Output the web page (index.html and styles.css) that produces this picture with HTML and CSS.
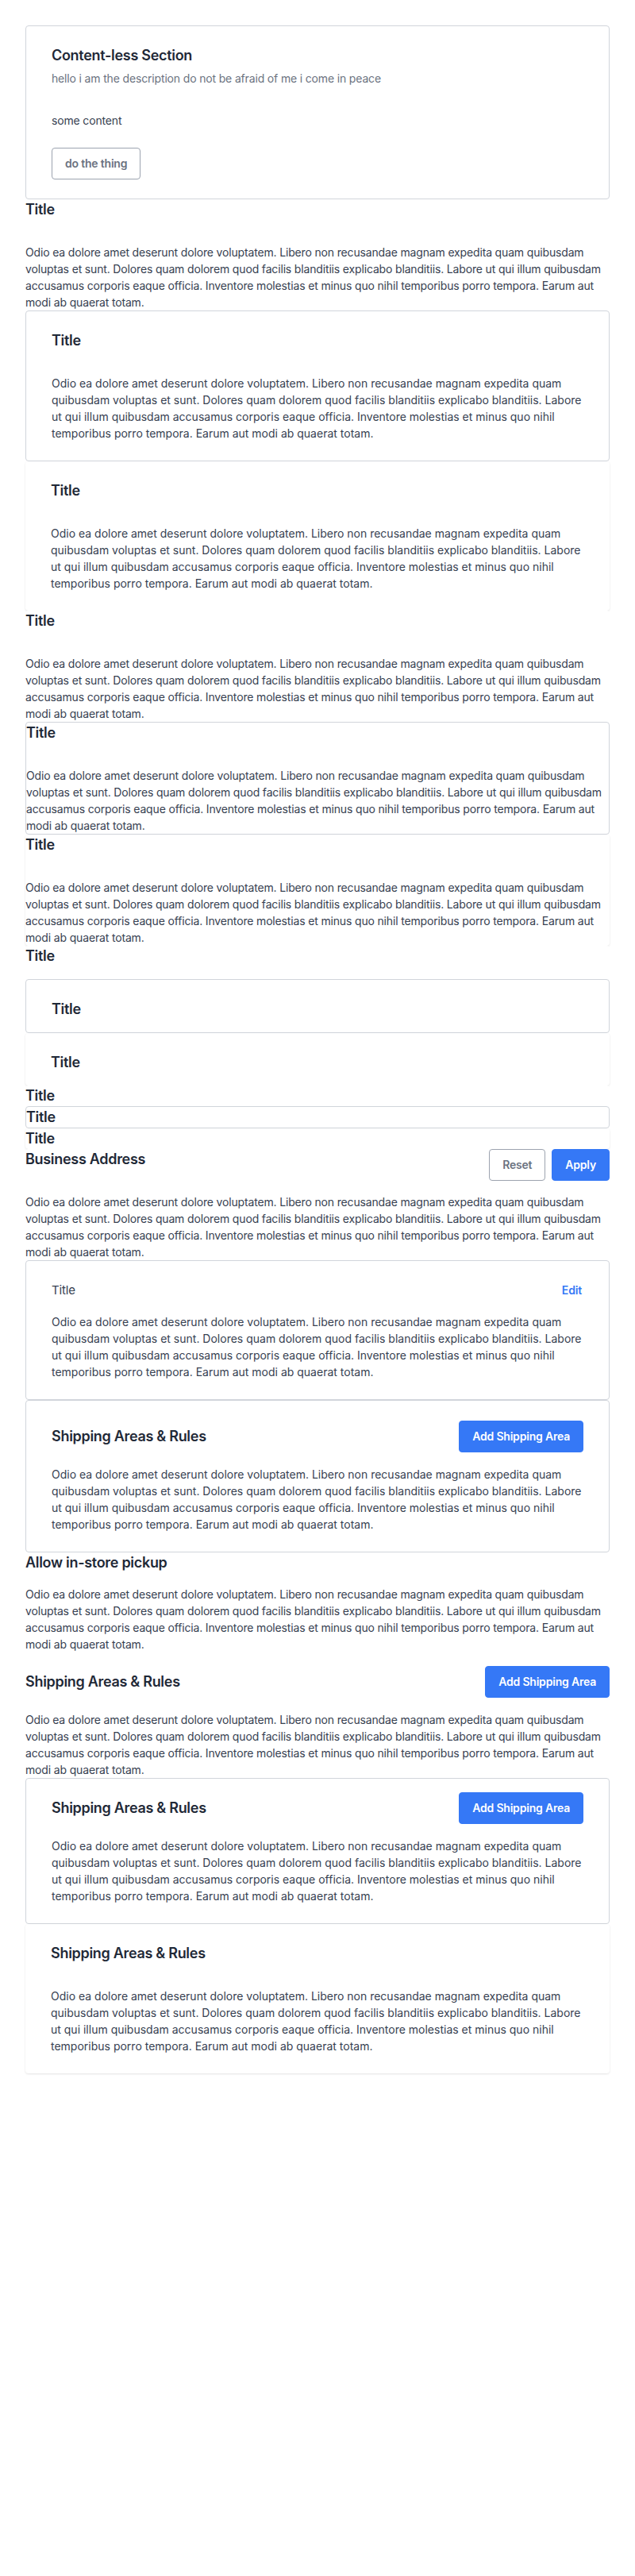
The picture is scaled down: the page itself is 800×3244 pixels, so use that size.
FILE: index.html
```html
<!DOCTYPE html>
<html lang="en">
<head>
<meta charset="utf-8">
<title>Sections</title>
<link rel="stylesheet" href="styles.css">
</head>
<body>
<main class="page">

  <section class="section section--bordered section--padded">
    <div class="section-header"><h2 class="section-title">Content-less Section</h2></div>
    <p class="section-desc">hello i am the description do not be afraid of me i come in peace</p>
    <div class="section-content">some content</div>
    <div class="section-footer"><button class="btn btn--secondary">do the thing</button></div>
  </section>

  <section class="section">
    <div class="section-header section-header--tall"><h2 class="section-title">Title</h2></div>
    <p class="section-body">Odio ea dolore amet deserunt dolore voluptatem. Libero non recusandae magnam expedita quam quibusdam voluptas et sunt. Dolores quam dolorem quod facilis blanditiis explicabo blanditiis. Labore ut qui illum quibusdam accusamus corporis eaque officia. Inventore molestias et minus quo nihil temporibus porro tempora. Earum aut modi ab quaerat totam.</p>
  </section>

  <section class="section section--bordered section--padded">
    <div class="section-header section-header--tall"><h2 class="section-title">Title</h2></div>
    <p class="section-body">Odio ea dolore amet deserunt dolore voluptatem. Libero non recusandae magnam expedita quam quibusdam voluptas et sunt. Dolores quam dolorem quod facilis blanditiis explicabo blanditiis. Labore ut qui illum quibusdam accusamus corporis eaque officia. Inventore molestias et minus quo nihil temporibus porro tempora. Earum aut modi ab quaerat totam.</p>
  </section>

  <section class="section section--raised section--padded">
    <div class="section-header section-header--tall"><h2 class="section-title">Title</h2></div>
    <p class="section-body">Odio ea dolore amet deserunt dolore voluptatem. Libero non recusandae magnam expedita quam quibusdam voluptas et sunt. Dolores quam dolorem quod facilis blanditiis explicabo blanditiis. Labore ut qui illum quibusdam accusamus corporis eaque officia. Inventore molestias et minus quo nihil temporibus porro tempora. Earum aut modi ab quaerat totam.</p>
  </section>

  <section class="section">
    <div class="section-header section-header--tall"><h2 class="section-title">Title</h2></div>
    <p class="section-body">Odio ea dolore amet deserunt dolore voluptatem. Libero non recusandae magnam expedita quam quibusdam voluptas et sunt. Dolores quam dolorem quod facilis blanditiis explicabo blanditiis. Labore ut qui illum quibusdam accusamus corporis eaque officia. Inventore molestias et minus quo nihil temporibus porro tempora. Earum aut modi ab quaerat totam.</p>
  </section>

  <section class="section section--bordered">
    <div class="section-header section-header--tall"><h2 class="section-title">Title</h2></div>
    <p class="section-body">Odio ea dolore amet deserunt dolore voluptatem. Libero non recusandae magnam expedita quam quibusdam voluptas et sunt. Dolores quam dolorem quod facilis blanditiis explicabo blanditiis. Labore ut qui illum quibusdam accusamus corporis eaque officia. Inventore molestias et minus quo nihil temporibus porro tempora. Earum aut modi ab quaerat totam.</p>
  </section>

  <section class="section section--raised">
    <div class="section-header section-header--tall"><h2 class="section-title">Title</h2></div>
    <p class="section-body">Odio ea dolore amet deserunt dolore voluptatem. Libero non recusandae magnam expedita quam quibusdam voluptas et sunt. Dolores quam dolorem quod facilis blanditiis explicabo blanditiis. Labore ut qui illum quibusdam accusamus corporis eaque officia. Inventore molestias et minus quo nihil temporibus porro tempora. Earum aut modi ab quaerat totam.</p>
  </section>

  <section class="section section--tail">
    <div class="section-header"><h2 class="section-title">Title</h2></div>
  </section>

  <section class="section section--bordered section--padded section--tail">
    <div class="section-header"><h2 class="section-title">Title</h2></div>
  </section>

  <section class="section section--raised section--padded section--tail">
    <div class="section-header"><h2 class="section-title">Title</h2></div>
  </section>

  <section class="section">
    <div class="section-header"><h2 class="section-title">Title</h2></div>
  </section>

  <section class="section section--bordered">
    <div class="section-header"><h2 class="section-title">Title</h2></div>
  </section>

  <section class="section section--raised">
    <div class="section-header"><h2 class="section-title">Title</h2></div>
  </section>

  <section class="section">
    <div class="section-header section-header--tall">
      <h2 class="section-title">Business Address</h2>
      <div class="section-actions">
        <button class="btn btn--secondary">Reset</button>
        <button class="btn btn--primary">Apply</button>
      </div>
    </div>
    <p class="section-body">Odio ea dolore amet deserunt dolore voluptatem. Libero non recusandae magnam expedita quam quibusdam voluptas et sunt. Dolores quam dolorem quod facilis blanditiis explicabo blanditiis. Labore ut qui illum quibusdam accusamus corporis eaque officia. Inventore molestias et minus quo nihil temporibus porro tempora. Earum aut modi ab quaerat totam.</p>
  </section>

  <section class="section section--bordered section--padded">
    <div class="section-header">
      <h3 class="section-subtitle">Title</h3>
      <a class="link-btn" href="#">Edit</a>
    </div>
    <p class="section-body">Odio ea dolore amet deserunt dolore voluptatem. Libero non recusandae magnam expedita quam quibusdam voluptas et sunt. Dolores quam dolorem quod facilis blanditiis explicabo blanditiis. Labore ut qui illum quibusdam accusamus corporis eaque officia. Inventore molestias et minus quo nihil temporibus porro tempora. Earum aut modi ab quaerat totam.</p>
  </section>

  <section class="section section--bordered section--padded">
    <div class="section-header section-header--center">
      <h2 class="section-title">Shipping Areas &amp; Rules</h2>
      <button class="btn btn--primary">Add Shipping Area</button>
    </div>
    <p class="section-body">Odio ea dolore amet deserunt dolore voluptatem. Libero non recusandae magnam expedita quam quibusdam voluptas et sunt. Dolores quam dolorem quod facilis blanditiis explicabo blanditiis. Labore ut qui illum quibusdam accusamus corporis eaque officia. Inventore molestias et minus quo nihil temporibus porro tempora. Earum aut modi ab quaerat totam.</p>
  </section>

  <section class="section">
    <div class="section-header"><h2 class="section-title">Allow in-store pickup</h2></div>
    <p class="section-body">Odio ea dolore amet deserunt dolore voluptatem. Libero non recusandae magnam expedita quam quibusdam voluptas et sunt. Dolores quam dolorem quod facilis blanditiis explicabo blanditiis. Labore ut qui illum quibusdam accusamus corporis eaque officia. Inventore molestias et minus quo nihil temporibus porro tempora. Earum aut modi ab quaerat totam.</p>
  </section>

  <section class="section section--lead">
    <div class="section-header section-header--center">
      <h2 class="section-title">Shipping Areas &amp; Rules</h2>
      <button class="btn btn--primary">Add Shipping Area</button>
    </div>
    <p class="section-body">Odio ea dolore amet deserunt dolore voluptatem. Libero non recusandae magnam expedita quam quibusdam voluptas et sunt. Dolores quam dolorem quod facilis blanditiis explicabo blanditiis. Labore ut qui illum quibusdam accusamus corporis eaque officia. Inventore molestias et minus quo nihil temporibus porro tempora. Earum aut modi ab quaerat totam.</p>
  </section>

  <section class="section section--bordered section--padded section--lead">
    <div class="section-header section-header--center">
      <h2 class="section-title">Shipping Areas &amp; Rules</h2>
      <button class="btn btn--primary">Add Shipping Area</button>
    </div>
    <p class="section-body">Odio ea dolore amet deserunt dolore voluptatem. Libero non recusandae magnam expedita quam quibusdam voluptas et sunt. Dolores quam dolorem quod facilis blanditiis explicabo blanditiis. Labore ut qui illum quibusdam accusamus corporis eaque officia. Inventore molestias et minus quo nihil temporibus porro tempora. Earum aut modi ab quaerat totam.</p>
  </section>

  <section class="section section--raised section--padded">
    <div class="section-header section-header--tall"><h2 class="section-title">Shipping Areas &amp; Rules</h2></div>
    <p class="section-body">Odio ea dolore amet deserunt dolore voluptatem. Libero non recusandae magnam expedita quam quibusdam voluptas et sunt. Dolores quam dolorem quod facilis blanditiis explicabo blanditiis. Labore ut qui illum quibusdam accusamus corporis eaque officia. Inventore molestias et minus quo nihil temporibus porro tempora. Earum aut modi ab quaerat totam.</p>
  </section>

</main>
</body>
</html>
```

FILE: styles.css
```css
* {
  box-sizing: border-box;
}

html, body {
  margin: 0;
  padding: 0;
  background: #ffffff;
}

body {
  font-family: Inter, "Noto Sans", "Liberation Sans", sans-serif;
  font-size: 14px;
  line-height: 21px;
  letter-spacing: -0.16px;
  color: #374151;
}

.page {
  padding: 32px;
  display: flex;
  flex-direction: column;
}

.section {
  background: #ffffff;
  border-radius: 4px;
}

.section--bordered {
  border: 1px solid #d1d5db;
}

.section--raised {
  box-shadow: 0 1px 3px 0 rgba(0, 0, 0, 0.08), 0 1px 2px 0 rgba(0, 0, 0, 0.04);
}

.section--padded {
  padding: 24px 32px;
}

.section--tail {
  padding-bottom: 16px;
}

.section--lead {
  padding-top: 16px;
}

.section-header {
  display: flex;
  justify-content: space-between;
  align-items: flex-start;
  gap: 16px;
}

.section-header--tall {
  min-height: 40px;
}

.section-header--center {
  align-items: center;
  min-height: 42px;
}

.section-title {
  margin: 0;
  font-size: 18px;
  line-height: 26px;
  font-weight: 600;
  letter-spacing: -0.3px;
  color: #1f2937;
}

.section-subtitle {
  margin: 0;
  font-size: 15px;
  line-height: 26px;
  font-weight: 400;
  color: #374151;
}

.section-desc {
  margin: 5px 0 0;
  color: #6b7280;
}

.section-content {
  margin-top: 32px;
}

.section-footer {
  margin-top: 24px;
  display: flex;
}

.section-body {
  margin: 16px 0 0;
}

.section--padded .section-body {
  letter-spacing: 0;
}

.section-actions {
  display: flex;
  gap: 8px;
}

.btn {
  height: 40px;
  padding: 0 16px;
  border-radius: 4px;
  font-family: inherit;
  font-size: 14px;
  font-weight: 600;
  line-height: 20px;
  letter-spacing: -0.2px;
  cursor: pointer;
}

.btn--secondary {
  background: #ffffff;
  border: 1px solid #9ca3af;
  color: #6b7280;
}

.btn--primary {
  background: #3578f6;
  border: 1px solid #3578f6;
  color: #ffffff;
}

.link-btn {
  color: #3578f6;
  font-weight: 600;
  font-size: 14px;
  line-height: 26px;
  text-decoration: none;
  padding-right: 2px;
}
```
